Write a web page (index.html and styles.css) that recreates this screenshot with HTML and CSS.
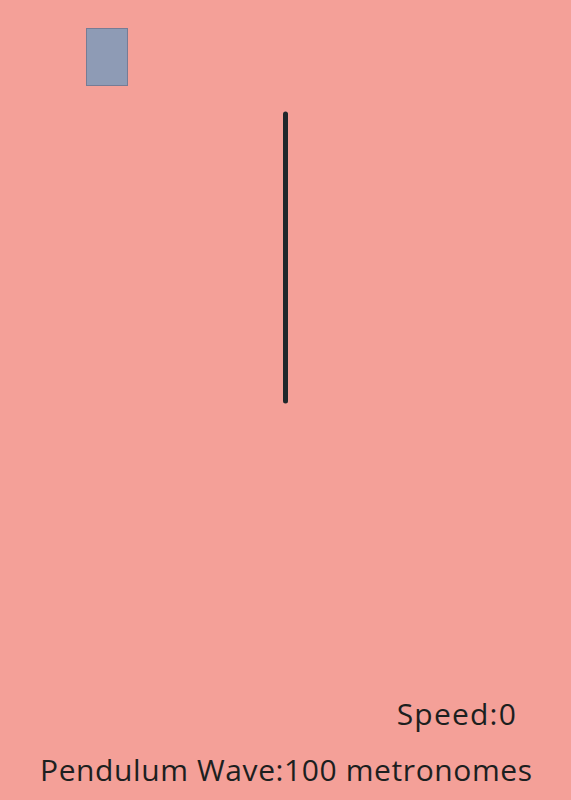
FILE: index.html
```html
<!DOCTYPE html>
<html>
<head>
<meta charset="utf-8">
<link rel="stylesheet" href="styles.css">
</head>
<body>
<div class="page">
  <svg class="stage" width="571" height="690" viewBox="0 0 571 690">
    <rect x="86.5" y="28.5" width="41" height="57" fill="#8e9bb5" stroke="#767c95" stroke-width="1"/>
    <line x1="285.5" y1="114" x2="285.5" y2="401" stroke="#1f272b" stroke-width="5" stroke-linecap="round"/>
  </svg>
  <div class="speed">Speed:0</div>
  <div class="title">Pendulum Wave:100 metronomes</div>
</div>
</body>
</html>
```
FILE: styles.css
```css
html, body {
  margin: 0;
  padding: 0;
  background: #f4a098;
}
.page {
  width: 571px;
  height: 800px;
  display: flex;
  flex-direction: column;
  font-family: "Open Sans", "DejaVu Sans", sans-serif;
  font-weight: 500;
  color: #1c1f1f;
}
.stage {
  display: block;
  flex: none;
}
.speed {
  align-self: flex-end;
  margin-right: 54px;
  margin-top: 4px;
  font-size: 30px;
  line-height: 40px;
  letter-spacing: 1.2px;
}
.title {
  margin-left: 40px;
  margin-top: 16px;
  font-size: 30px;
  line-height: 40px;
  letter-spacing: 0.6px;
  white-space: nowrap;
}
```
